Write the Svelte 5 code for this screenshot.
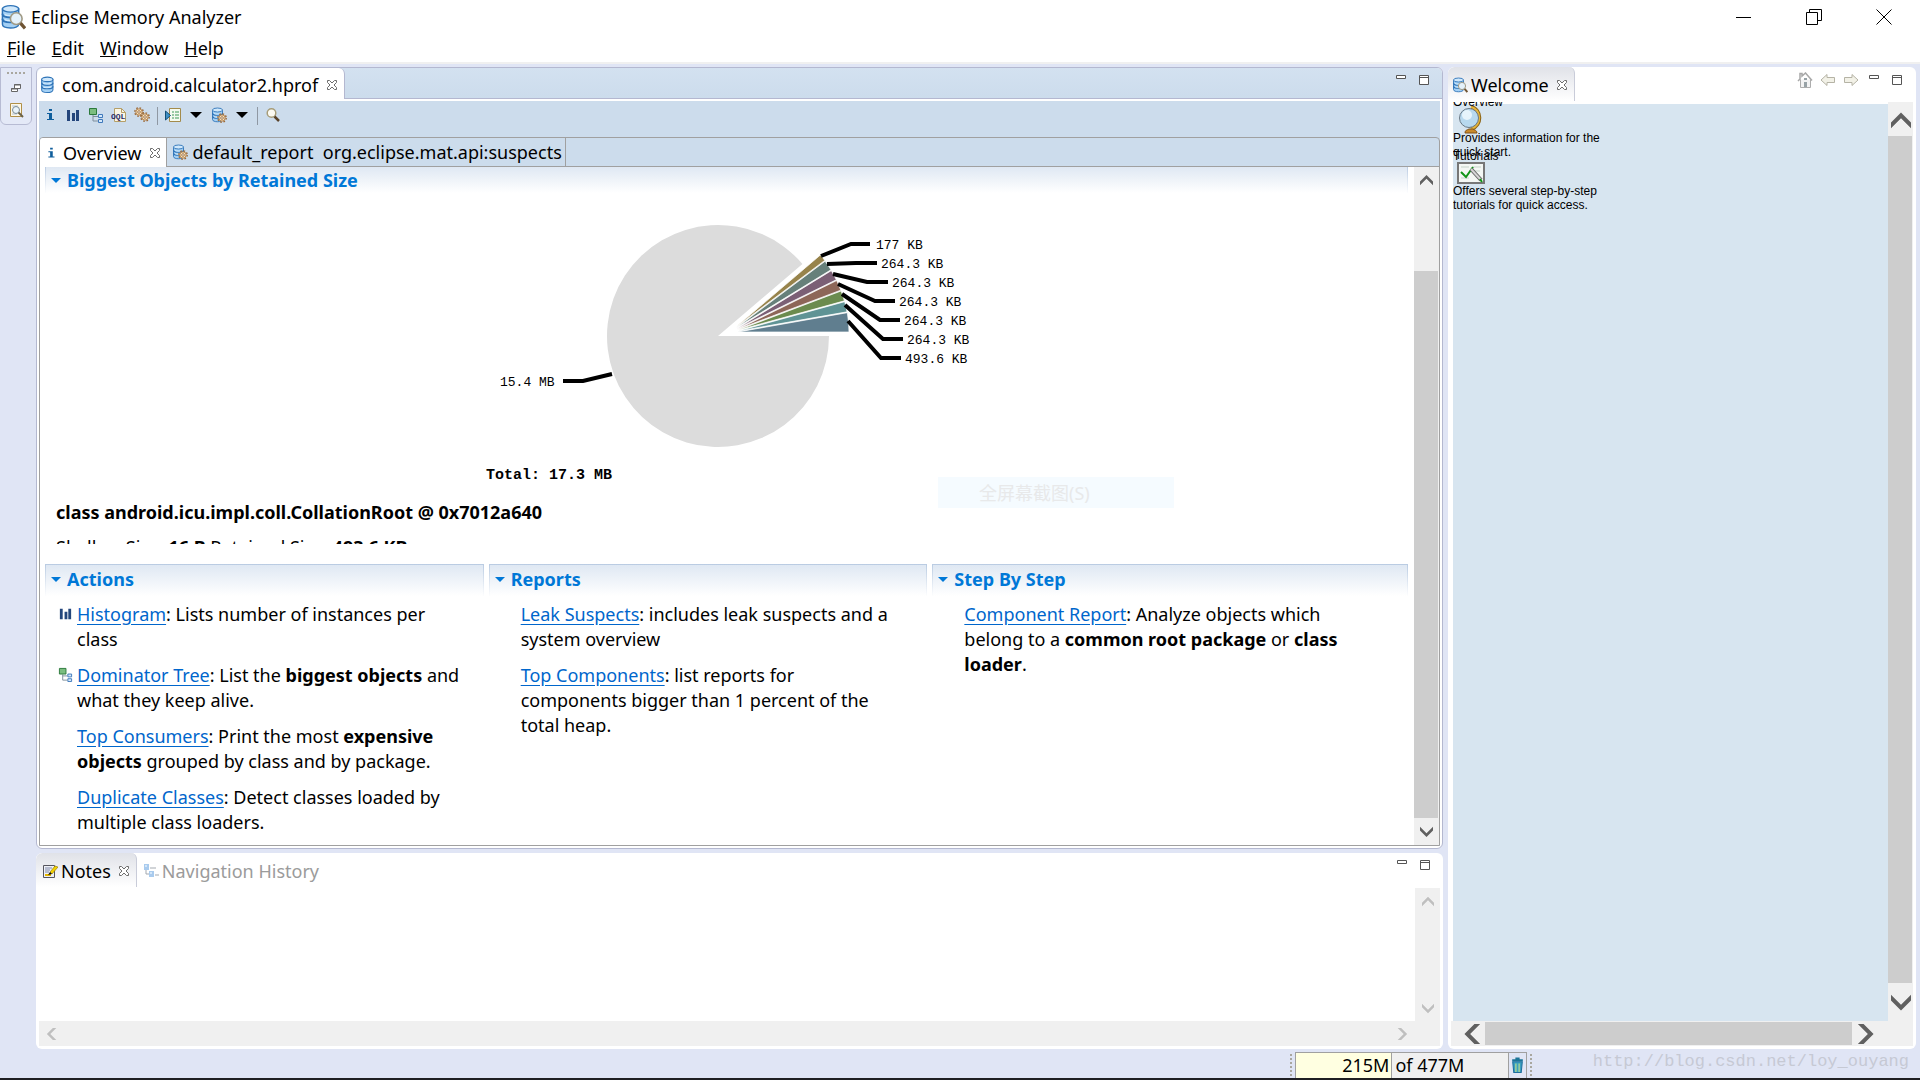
<script>
    const menus = ['File', 'Edit', 'Window', 'Help'];

    const cx = 238;
    const cy = 143;
    const radius = 111;
    const total = 17715;

    const objects = [
        { kb: 493.6, label: '493.6 KB', color: '#607e8f', line: '368,128 401,165 421,165', x: 425, y: 165 },
        { kb: 264.3, label: '264.3 KB', color: '#5f9395', line: '365,112 403,146 423,146', x: 427, y: 146 },
        { kb: 264.3, label: '264.3 KB', color: '#6b8b4e', line: '362,101 400,127 420,127', x: 424, y: 127 },
        { kb: 264.3, label: '264.3 KB', color: '#8d6658', line: '358,91 395,108 415,108', x: 419, y: 108 },
        { kb: 264.3, label: '264.3 KB', color: '#7b5f75', line: '353,81 387,89 408,89', x: 412, y: 89 },
        { kb: 264.3, label: '264.3 KB', color: '#67807a', line: '347,71 376,70 397,70', x: 401, y: 70 },
        { kb: 177, label: '177 KB', color: '#97834b', line: '341,63 371,51 390,51', x: 396, y: 51 }
    ];

    function wedge(x, y, from, to, large) {
        const point = a => `${x + radius * Math.cos(a)} ${y - radius * Math.sin(a)}`;
        return `M${x} ${y}L${point(from)}A${radius} ${radius} 0 ${large} 0 ${point(to)}Z`;
    }

    let angle = 0;
    const slices = objects.map((object, i) => {
        const from = angle;
        angle += (object.kb / total) * Math.PI * 2;
        const t = i / (objects.length - 1);
        return { ...object, d: wedge(258 - 2 * t, 139 - 5 * t, from, angle, 0) };
    });
    const rest = wedge(cx, cy, angle, Math.PI * 2, 1);

    let notes = '';
</script>

{#snippet database()}
    <g stroke="#2f74b8" stroke-width=".9" fill="#a3d0f5">
        <path d="M1.500 3v9.500c0 3 10 3 10 0V3z" />
        <path d="M1.500 6c0 3 10 3 10 0M1.500 9c0 3 10 3 10 0" fill="none" stroke-width="1.200" />
        <path d="M3 6.400c1 1 5 1 7 0M3 9.600c1 1 5 1 7 0" stroke="#d5ebfb" fill="none" />
        <ellipse cx="6.500" cy="3" rx="5" ry="2" fill="#d0e8fb" />
    </g>
{/snippet}

{#snippet gear(x, y)}
    <g transform="translate({x} {y})">
        <circle r="4.200" fill="none" stroke="#9c6a38" stroke-width="1.400" stroke-dasharray="1.650 1.650" />
        <circle r="3.200" fill="#fae3bd" stroke="#a8743c" stroke-width=".9" />
        <circle r="1.300" fill="#fff" stroke="#8d5a28" stroke-width=".8" />
    </g>
{/snippet}

{#snippet icon(name, size = 16)}
    <svg class="icon" width={size} height={size} viewBox="0 0 16 16" aria-hidden="true">
        {#if name === 'db'}
            {@render database()}
        {:else if name === 'app'}
            {@render database()}
            <circle cx="10" cy="9" r="3.600" fill="#e4f1fb" stroke="#a09a85" />
            <path d="M12.600 11.800l2.800 3.200" stroke="#6e5433" stroke-width="2" />
        {:else if name === 'dbgear'}
            {@render database()}
            {@render gear(11, 11)}
        {:else if name === 'info'}
            <path d="M7 2h3v2H7zM5 6h5v6h2v1H5v-1h2V7H5z" fill="#0f5e9c" />
        {:else if name === 'bars'}
            <path d="M2 3h3v11H2zM7 6h3v8H7zM11 3h3v11h-3z" fill="#24467c" />
        {:else if name === 'tree'}
            <path d="M5 8v6h5M5 9.500h5" fill="none" stroke="#7e8f9c" />
            <path d="M1.500 1.500h7v6h-7z" fill="#7bbd7f" stroke="#2c7a3c" />
            <path d="M10.500 7.500h4v3h-4zM10.500 12.500h4v3h-4z" fill="#d5e8fa" stroke="#3f79bb" />
        {:else if name === 'oql'}
            <path d="M3.500 1.500h7l4 4v9h-11z" fill="#faf6e6" stroke="#b59f68" />
            <path d="M10.500 1.500v4h4" fill="none" stroke="#b59f68" />
            <text x="0" y="12" font-size="8" font-weight="bold" font-family="Liberation Mono, monospace" fill="#2b2b66">OQL</text>
        {:else if name === 'gears'}
            {@render gear(5, 5)}
            {@render gear(11, 10)}
        {:else if name === 'run'}
            <path d="M4.500 1.500h11v13h-11z" fill="#f4faef" stroke="#a38b4c" />
            <path d="M7 5h2M10 5h4M7 8h2M10 8h4M7 11h2M10 11h4" stroke="#3f9958" />
            <path d="M.5 4l5 4.500-5 4.500z" fill="#3b8fc4" stroke="#134d76" />
        {:else if name === 'search'}
            <circle cx="6.500" cy="6" r="4.300" fill="#fbfaf2" stroke="#a79d79" stroke-width="1.500" />
            <path d="M9.500 9.500l4.500 4.500" stroke="#59432a" stroke-width="2.500" />
        {:else if name === 'page'}
            <path d="M2.500 1.500h11v13h-11z" fill="#fdf8e8" stroke="#b08f48" />
            <path d="M4 4h6M4 12h5" stroke="#b5c6da" />
            <circle cx="8" cy="8" r="3.500" fill="#e9f4fb" stroke="#7a8a95" />
            <path d="M10.500 10.500l4.500 4.500" stroke="#6b6147" stroke-width="2" />
        {:else if name === 'notes'}
            <path d="M1.500 2.500h11v12h-11z" fill="#eef0f6" stroke="#55555f" />
            <path d="M3 5h7M3 7h5M3 9h4" stroke="#7e88a8" />
            <path d="M3 12h6" stroke="#e6b800" stroke-width="2" />
            <path d="M8 9l5-6 3 1-6 7z" fill="#f4d100" stroke="#8b7300" stroke-width=".6" />
            <path d="M6 12l2-3 2 2z" fill="#111" />
        {:else if name === 'history'}
            <path d="M3 5v6h4M7 5h6M12 12h4" fill="none" stroke="#a3a9b0" />
            <path d="M1 1h5v6H1zM6 8h5v6H6z" fill="#a9cbee" />
            <path d="M2 2h2v2H2zM7 9h2v2H7z" fill="#d3e6f8" />
        {:else if name === 'close'}
            <path d="M3.500 3.500h2L8 6l2.500-2.500h2v2L10 8l2.500 2.500v2h-2L8 10l-2.500 2.500h-2v-2L6 8 3.500 5.500z" fill="#fff" stroke="#6c6c6c" />
        {:else if name === 'min'}
            <path d="M3.500 3.500h9v3h-9z" fill="#fff" stroke="#555" />
        {:else if name === 'max'}
            <path d="M3.500 3.500h9v9h-9zM3.500 5.500h9" fill="#fff" stroke="#555" />
        {:else if name === 'restore'}
            <path d="M6.500 4.500h6v4h-6zM3.500 8.500h6v3h-6z" fill="#fff" stroke="#666" />
            <path d="M6 5h7M3 9h7" stroke="#666" />
        {:else if name === 'home'}
            <path d="M3.500 7.500v8h10v-8" fill="#f3f3f3" stroke="#adadad" />
            <path d="M1 9l2-2V1.500h2V4l3.500-3L15 8.500" fill="none" stroke="#a8a8a8" stroke-width="1.500" />
            <path d="M7 6h3v2H7zM7 10h3v5H7z" fill="#98a2a6" />
        {:else if name === 'back'}
            <path d="M1 8l6-5.500v3h7.500v5H7v3z" fill="#f2f1e7" stroke="#b5b3a5" />
        {:else if name === 'forward'}
            <path d="M15 8L9 2.500v3H1.500v5H9v3z" fill="#f2f1e7" stroke="#b5b3a5" />
        {:else if name === 'caret'}
            <path d="M2 5h12l-6 6z" fill="#000" />
        {:else if name === 'trash'}
            <path d="M3.500 4.500h9l-1 10h-7z" fill="#3b9fbf" stroke="#1e6e9e" />
            <path d="M6.500 6v8M9.500 6v8" stroke="#c9e58b" />
            <path d="M3 3h10M6 1.500h4" stroke="#1b7598" stroke-width="2" />
        {/if}
    </svg>
{/snippet}

{#snippet chevron(direction, size)}
    <svg class="chevron {direction}" width={size} height={size} viewBox="0 0 14 14" aria-hidden="true">
        <path d="M0 8l7-7 7 7v4L7 5l-7 7z" fill="currentColor" />
    </svg>
{/snippet}

{#snippet windowButtons()}
    <button class="small" aria-label="Minimize">{@render icon('min', 16)}</button>
    <button class="small" aria-label="Maximize">{@render icon('max', 16)}</button>
{/snippet}

<div class="app">
    <header>
        <div class="title">
            {@render icon('app', 26)}
            <span>Eclipse Memory Analyzer</span>
            <div class="window-controls">
                <button aria-label="Minimize window">
                    <svg width="16" height="16"><path d="M0 8.500h15" stroke="#000" /></svg>
                </button>
                <button aria-label="Restore window">
                    <svg width="16" height="16"><path d="M.5 3.500h11v12H.5zM3.500 3.500v-3h12v11h-4" fill="none" stroke="#000" /></svg>
                </button>
                <button aria-label="Close window">
                    <svg width="16" height="16"><path d="M.5.5l15 15M15.500.5l-15 15" stroke="#000" /></svg>
                </button>
            </div>
        </div>
        <nav>
            {#each menus as menu}
                <button><u>{menu[0]}</u>{menu.slice(1)}</button>
            {/each}
        </nav>
    </header>

    <main>
        <aside class="trim">
            <div class="trim-box">
                <i class="dots"></i>
                <button class="small" aria-label="Restore">{@render icon('restore')}</button>
                <button class="small" aria-label="Welcome">{@render icon('page')}</button>
            </div>
        </aside>

        <div class="stack">
            <section class="editor">
                <div class="tabs">
                    <div class="tab">
                        {@render icon('db', 18)}
                        <button>com.android.calculator2.hprof</button>
                        <button class="small" aria-label="Close">{@render icon('close')}</button>
                    </div>
                    <div class="corner">{@render windowButtons()}</div>
                </div>
                <div class="editor-body">
                    <div class="toolbar">
                        <button aria-label="Overview">{@render icon('info')}</button>
                        <button aria-label="Histogram">{@render icon('bars')}</button>
                        <button aria-label="Dominator Tree">{@render icon('tree')}</button>
                        <button aria-label="OQL">{@render icon('oql')}</button>
                        <button aria-label="Thread Overview">{@render icon('gears')}</button>
                        <i class="separator"></i>
                        <button aria-label="Run Report">{@render icon('run')}</button>
                        <button aria-label="Report menu">{@render icon('caret')}</button>
                        <button aria-label="Queries">{@render icon('dbgear')}</button>
                        <button aria-label="Query menu">{@render icon('caret')}</button>
                        <i class="separator"></i>
                        <button aria-label="Find">{@render icon('search')}</button>
                    </div>
                    <div class="inner">
                        <div class="inner-tabs">
                            <div class="inner-tab active">
                                {@render icon('info', 14)}
                                <button>Overview</button>
                                <button class="small" aria-label="Close">{@render icon('close')}</button>
                            </div>
                            <div class="inner-tab">
                                {@render icon('dbgear')}
                                <button>default_report&nbsp; org.eclipse.mat.api:suspects</button>
                            </div>
                        </div>
                        <div class="scroll-area">
                            <div class="page">
                                <div class="biggest">
                                    <h2 class="cut"><i></i>Biggest Objects by Retained Size</h2>
                                    <svg class="pie" width="494" height="300" viewBox="0 0 494 300">
                                        <path d={rest} fill="#dcdcdc" />
                                        {#each slices as slice}
                                            <path d={slice.d} fill={slice.color} stroke="#fff" stroke-width=".7" />
                                        {/each}
                                        {#each slices as slice}
                                            <polyline points={slice.line} />
                                            <text x={slice.x} y={slice.y + 5}>{slice.label}</text>
                                        {/each}
                                        <polyline points="132,181 103,188 83,188" />
                                        <text x="20" y="193">15.4 MB</text>
                                        <text class="total" x="6" y="286">Total: 17.3 MB</text>
                                    </svg>
                                    <p class="object"><b>class android.icu.impl.coll.CollationRoot @ 0x7012a640</b></p>
                                    <p class="object">Shallow Size: <b>16 B</b> Retained Size: <b>493.6 KB</b></p>
                                </div>
                                <div class="columns">
                                    <section>
                                        <h2><i></i>Actions</h2>
                                        <p><span class="bullet">{@render icon('bars', 15)}</span><a href="#histogram">Histogram</a>: Lists number of instances per class</p>
                                        <p><span class="bullet">{@render icon('tree', 15)}</span><a href="#dominator">Dominator Tree</a>: List the <b>biggest objects</b> and what they keep alive.</p>
                                        <p><a href="#consumers">Top Consumers</a>: Print the most <b>expensive objects</b> grouped by class and by package.</p>
                                        <p><a href="#duplicates">Duplicate Classes</a>: Detect classes loaded by multiple class loaders.</p>
                                    </section>
                                    <section>
                                        <h2><i></i>Reports</h2>
                                        <p><a href="#leaks">Leak Suspects</a>: includes leak suspects and a system overview</p>
                                        <p><a href="#components">Top Components</a>: list reports for components bigger than 1 percent of the total heap.</p>
                                    </section>
                                    <section>
                                        <h2><i></i>Step By Step</h2>
                                        <p><a href="#component">Component Report</a>: Analyze objects which belong to a <b>common root package</b> or <b>class loader</b>.</p>
                                    </section>
                                </div>
                                <div class="ghost">全屏幕截图(S)</div>
                            </div>
                            <div class="vbar">
                                <button aria-label="Scroll up">{@render chevron('up', 13)}</button>
                                <div class="track"><div class="thumb"></div></div>
                                <button aria-label="Scroll down">{@render chevron('down', 13)}</button>
                            </div>
                        </div>
                    </div>
                </div>
            </section>

            <section class="view notes-view">
                <div class="view-tabs">
                    <div class="view-tab active">
                        {@render icon('notes')}
                        <button>Notes</button>
                        <button class="small" aria-label="Close">{@render icon('close')}</button>
                    </div>
                    <div class="view-tab muted">
                        {@render icon('history')}
                        <button>Navigation History</button>
                    </div>
                    <div class="corner">{@render windowButtons()}</div>
                </div>
                <div class="notes">
                    <textarea aria-label="Notes" bind:value={notes}></textarea>
                    <div class="vbar disabled">
                        <button aria-label="Scroll up">{@render chevron('up', 12)}</button>
                        <div class="track"></div>
                        <button aria-label="Scroll down">{@render chevron('down', 12)}</button>
                    </div>
                </div>
                <div class="hbar disabled">
                    <button aria-label="Scroll left">{@render chevron('left', 12)}</button>
                    <div class="track"></div>
                    <button aria-label="Scroll right">{@render chevron('right', 12)}</button>
                </div>
            </section>
        </div>

        <section class="view welcome">
            <div class="view-tabs">
                <div class="view-tab active">
                    {@render icon('app')}
                    <button>Welcome</button>
                    <button class="small" aria-label="Close">{@render icon('close')}</button>
                </div>
                <div class="corner">
                    <button class="small" aria-label="Home">{@render icon('home')}</button>
                    <button class="small" aria-label="Back">{@render icon('back')}</button>
                    <button class="small" aria-label="Forward">{@render icon('forward')}</button>
                    {@render windowButtons()}
                </div>
            </div>
            <div class="welcome-body">
                <div class="intro">
                    <div class="entry">
                        <a href="#overview">Overview</a>
                        <svg width="34" height="28" viewBox="-3 0 34 28" aria-hidden="true">
                            <path d="M15 1c10 2 12 18 0 22" fill="none" stroke="#8d6414" stroke-width="4" />
                            <path d="M15 1c10 2 12 18 0 22" fill="none" stroke="#e5b53c" stroke-width="2" />
                            <path d="M9 27c0-3 2-3 4-4h4c1 1 4 1 4 4z" fill="#c98a2c" stroke="#80531b" />
                            <circle cx="13" cy="12" r="9.500" fill="#b8d9ef" stroke="#6a7986" />
                            <circle cx="11" cy="9" r="5" fill="#e6f4fc" />
                        </svg>
                        <p>Provides information for the quick start.</p>
                    </div>
                    <div class="entry overlap">
                        <a href="#tutorials">Tutorials</a>
                        <svg width="34" height="26" viewBox="0 -1 34 26" aria-hidden="true">
                            <path d="M5 2h26v20H5z" fill="#f4f7f4" stroke="#777" stroke-width="2" />
                            <path d="M8 6h8M20 6h8M8 17h8M21 10h6" stroke="#c5d3c9" />
                            <path d="M8 11l5 5 7-10" fill="none" stroke="#109416" stroke-width="2" />
                            <path d="M18 8l10 11" stroke="#666" stroke-width="4" />
                            <path d="M18 8l10 11" stroke="#d5d5d5" stroke-width="2" />
                            <path d="M27 18l2 3" stroke="#109416" stroke-width="2" />
                        </svg>
                        <p>Offers several step-by-step tutorials for quick access.</p>
                    </div>
                </div>
                <div class="vbar big">
                    <button aria-label="Scroll up">{@render chevron('up', 20)}</button>
                    <div class="track"><div class="thumb"></div></div>
                    <button aria-label="Scroll down">{@render chevron('down', 20)}</button>
                </div>
            </div>
            <div class="hbar big">
                <button aria-label="Scroll left">{@render chevron('left', 20)}</button>
                <div class="track"><div class="thumb"></div></div>
                <button aria-label="Scroll right">{@render chevron('right', 20)}</button>
            </div>
        </section>
    </main>

    <footer>
        <i class="grip"></i>
        <div class="heap">
            <span class="used">215M</span>
            <span class="max">of 477M</span>
            <button class="small" aria-label="Run garbage collector">{@render icon('trash', 17)}</button>
        </div>
        <i class="grip"></i>
        <span class="watermark">http://blog.csdn.net/loy_ouyang</span>
    </footer>
</div>

<style>
    :global(body) {
        background: #e0e5f5;
    }
    .app {
        height: 100vh;
        box-sizing: border-box;
        display: flex;
        flex-direction: column;
        border-bottom: 2px solid #1f1f22;
        background: #e0e5f5;
        color: #000;
        font-family: "Noto Sans", "Noto Sans CJK SC", sans-serif;
        font-size: 18px;
        line-height: 24px;
    }
    button {
        border: none;
        background: none;
        padding: 0;
        font: inherit;
        color: inherit;
        white-space: nowrap;
    }
    .small {
        display: flex;
    }
    .icon {
        flex: none;
        display: block;
    }
    p, h2 {
        margin: 0;
    }

    header {
        background: #fff;
        border-bottom: 2px solid #f0f0f0;
    }
    .title {
        height: 34px;
        display: flex;
        align-items: center;
        gap: 5px;
    }
    .window-controls {
        margin-left: auto;
        margin-right: 28px;
        display: flex;
        gap: 54px;
    }
    .window-controls svg {
        display: block;
    }
    nav {
        height: 28px;
        display: flex;
        align-items: center;
        gap: 16px;
        padding-left: 7px;
    }

    main {
        flex: 1;
        min-height: 0;
        display: grid;
        grid-template-columns: 32px minmax(0, 3fr) minmax(0, 1fr);
        gap: 4px;
        padding: 3px 4px 0 0;
    }
    .trim-box {
        height: 56px;
        border: 1px solid #b7bbd3;
        border-radius: 0 0 6px 6px;
        display: flex;
        flex-direction: column;
        align-items: center;
        gap: 6px;
        background: #e4e9f7;
    }
    .dots {
        width: 18px;
        margin-top: 4px;
        border-top: 2px dotted #a9a79f;
    }
    .stack {
        min-height: 0;
        display: flex;
        flex-direction: column;
        gap: 4px;
    }

    .editor {
        flex: 1;
        min-height: 0;
        display: flex;
        flex-direction: column;
        border: 1px solid #b4b8d0;
        border-radius: 6px;
        background: #fff;
        overflow: hidden;
    }
    .tabs {
        height: 30px;
        display: flex;
        border-bottom: 1px solid #b4b8d0;
        background: linear-gradient(#d3e1f0, #ccdcec);
    }
    .tab {
        display: flex;
        align-items: center;
        gap: 4px;
        padding: 2px 4px 0 3px;
        margin-bottom: -1px;
        border-right: 1px solid #b4b8d0;
        border-radius: 6px 6px 0 0;
        background: #fff;
    }
    .tab .small, .view-tab .small {
        margin-left: 2px;
    }
    .corner {
        display: flex;
        gap: 7px;
        margin-left: auto;
        padding: 4px 10px 0 0;
    }
    .editor-body {
        flex: 1;
        min-height: 0;
        display: flex;
        flex-direction: column;
        margin: 2px;
        background: #ccdcec;
    }
    .toolbar {
        height: 36px;
        box-sizing: border-box;
        padding: 6px 0 0 3px;
        display: flex;
        gap: 7px;
        align-items: flex-start;
    }
    .toolbar button {
        display: flex;
    }
    .separator {
        width: 1px;
        height: 18px;
        background: #8f98a3;
    }
    .inner {
        flex: 1;
        min-height: 0;
        display: flex;
        flex-direction: column;
        border: 1px solid #a0a0a0;
        border-radius: 4px 4px 0 0;
        overflow: hidden;
    }
    .inner-tabs {
        height: 28px;
        display: flex;
        border-bottom: 1px solid #a0a0a0;
    }
    .inner-tab {
        display: flex;
        align-items: center;
        gap: 5px;
        padding: 0 3px 0 5px;
        border-right: 1px solid #a0a0a0;
    }
    .inner-tab.active {
        margin-bottom: -1px;
        padding-left: 4px;
        background: #fff;
    }
    .scroll-area {
        flex: 1;
        min-height: 0;
        display: flex;
        background: #fff;
    }
    .page {
        position: relative;
        flex: 1;
        min-width: 0;
        overflow: hidden;
        padding: 0 6px 0 5px;
    }
    .biggest {
        height: 377px;
        overflow: hidden;
    }
    h2 {
        display: flex;
        align-items: center;
        gap: 6px;
        height: 32px;
        box-sizing: border-box;
        padding: 0 0 2px 5px;
        border: 1px solid #b9cbe2;
        border-bottom: none;
        border-image: linear-gradient(#b9cbe2, #fff) 1;
        background: linear-gradient(#dfe8f3, #fff);
        font-size: 18px;
        color: #0078d7;
    }
    h2 i {
        border: 5px solid transparent;
        border-top-color: #0078d7;
        border-bottom-width: 0;
    }
    h2.cut {
        height: 26px;
        padding-bottom: 0;
        border-top: none;
    }
    .pie {
        display: block;
        margin: 0 auto;
    }
    .pie polyline {
        fill: none;
        stroke: #000;
        stroke-width: 4px;
    }
    .pie text {
        font: 13px "Liberation Mono", monospace;
    }
    .pie .total {
        font-size: 15px;
        font-weight: bold;
    }
    .object {
        margin: 7px 0 11px 11px;
    }
    .columns {
        margin-top: 20px;
        display: grid;
        grid-template-columns: 439fr 439fr 476fr;
        gap: 5px;
        line-height: 25px;
    }
    .columns p {
        position: relative;
        max-width: 383px;
        margin: 6px 0 11px 32px;
    }
    .columns p + p {
        margin-top: 0;
    }
    a {
        color: #0066cc;
        text-decoration: underline;
        text-underline-offset: 3px;
    }
    .bullet {
        position: absolute;
        left: -19px;
        top: 4px;
    }
    .ghost {
        position: absolute;
        left: 898px;
        top: 310px;
        width: 195px;
        padding: 4px 0 3px 41px;
        background: #f5fbff;
        color: #e8e9ea;
    }

    .vbar {
        width: 25px;
        display: flex;
        flex-direction: column;
        background: #f0f0f0;
        color: #606060;
    }
    .hbar {
        height: 25px;
        display: flex;
        background: #f0f0f0;
        color: #606060;
    }
    .vbar button {
        height: 27px;
    }
    .hbar button {
        width: 25px;
    }
    .vbar button, .hbar button {
        display: flex;
        align-items: center;
        justify-content: center;
    }
    .track {
        flex: 1;
        display: flex;
    }
    .thumb {
        flex: 1;
        background: #cdcdcd;
    }
    .vbar .track {
        padding-right: 1px;
    }
    .scroll-area .track {
        padding-top: 77px;
    }
    .disabled {
        color: #bfbfbf;
    }
    .down {
        transform: rotate(180deg);
    }
    .left {
        transform: rotate(-90deg);
    }
    .right {
        transform: rotate(90deg);
    }

    .view {
        display: flex;
        flex-direction: column;
        margin-bottom: 1px;
        padding: 0 3px 3px;
        border-radius: 6px;
        background: #fff;
        overflow: hidden;
    }
    .notes-view {
        height: 193px;
    }
    .view-tabs {
        height: 35px;
        display: flex;
        margin: 0 -3px;
    }
    .view-tab {
        height: 32px;
        display: flex;
        align-items: center;
        gap: 3px;
        padding: 2px 4px 0 6px;
    }
    .view-tab.active {
        border-right: 1px solid #c9ccd9;
        border-radius: 6px 6px 0 0;
        background: linear-gradient(#e0e2e8, #fff);
    }
    .muted {
        color: #9b9b9b;
    }
    .notes {
        flex: 1;
        min-height: 0;
        display: flex;
    }
    textarea {
        flex: 1;
        border: none;
        outline: none;
        resize: none;
        font: inherit;
    }
    .hbar.disabled {
        padding-right: 26px;
    }

    .welcome {
        margin-left: 1px;
    }
    .welcome .view-tab {
        padding-left: 4px;
    }
    .welcome .corner {
        padding-right: 11px;
        padding-top: 5px;
    }
    .welcome-body {
        flex: 1;
        min-height: 0;
        display: flex;
        padding-left: 2px;
    }
    .intro {
        flex: 1;
        overflow: hidden;
        background: linear-gradient(#fff 2px, #d7e5f0 2px);
        font: 12px/14px "Liberation Sans", Arial, sans-serif;
    }
    .entry {
        width: 160px;
        margin-top: -7px;
    }
    .entry a {
        display: block;
        color: #000;
        text-decoration: none;
    }
    .entry svg {
        display: block;
        margin: -3px 0;
    }
    .entry.overlap {
        margin-top: -10px;
    }
    .entry.overlap svg {
        margin-bottom: -2px;
    }
    .hbar.big {
        padding: 0 36px 0 9px;
    }
    .hbar.big .track {
        padding: 1px 0;
    }
    .vbar.big button {
        height: 38px;
    }
    .vbar.big .track {
        margin-top: -4px;
    }

    footer {
        height: 28px;
        display: flex;
        align-items: flex-end;
        gap: 3px;
        padding-left: 67vw;
        padding-right: 11px;
    }
    .grip {
        height: 22px;
        margin-bottom: 2px;
        margin-left: 4px;
        border-left: 2px dotted #a9a79f;
    }
    .heap {
        display: flex;
        height: 25px;
        border: 1px solid #a0a0a0;
        border-bottom: none;
    }
    .used {
        width: 93px;
        padding-right: 2px;
        border-right: 1px solid #a0a0a0;
        background: #ffffe1;
        text-align: right;
    }
    .max {
        width: 113px;
        padding-left: 3px;
        border-right: 1px solid #a0a0a0;
        background: #f0f0f0;
    }
    .heap .small {
        align-items: center;
        height: 25px;
    }
    .heap + .grip {
        margin-left: 0;
    }
    .watermark {
        margin-left: auto;
        margin-bottom: 4px;
        font: 17px/24px "Liberation Mono", monospace;
        color: #c6c9d4;
    }
</style>
